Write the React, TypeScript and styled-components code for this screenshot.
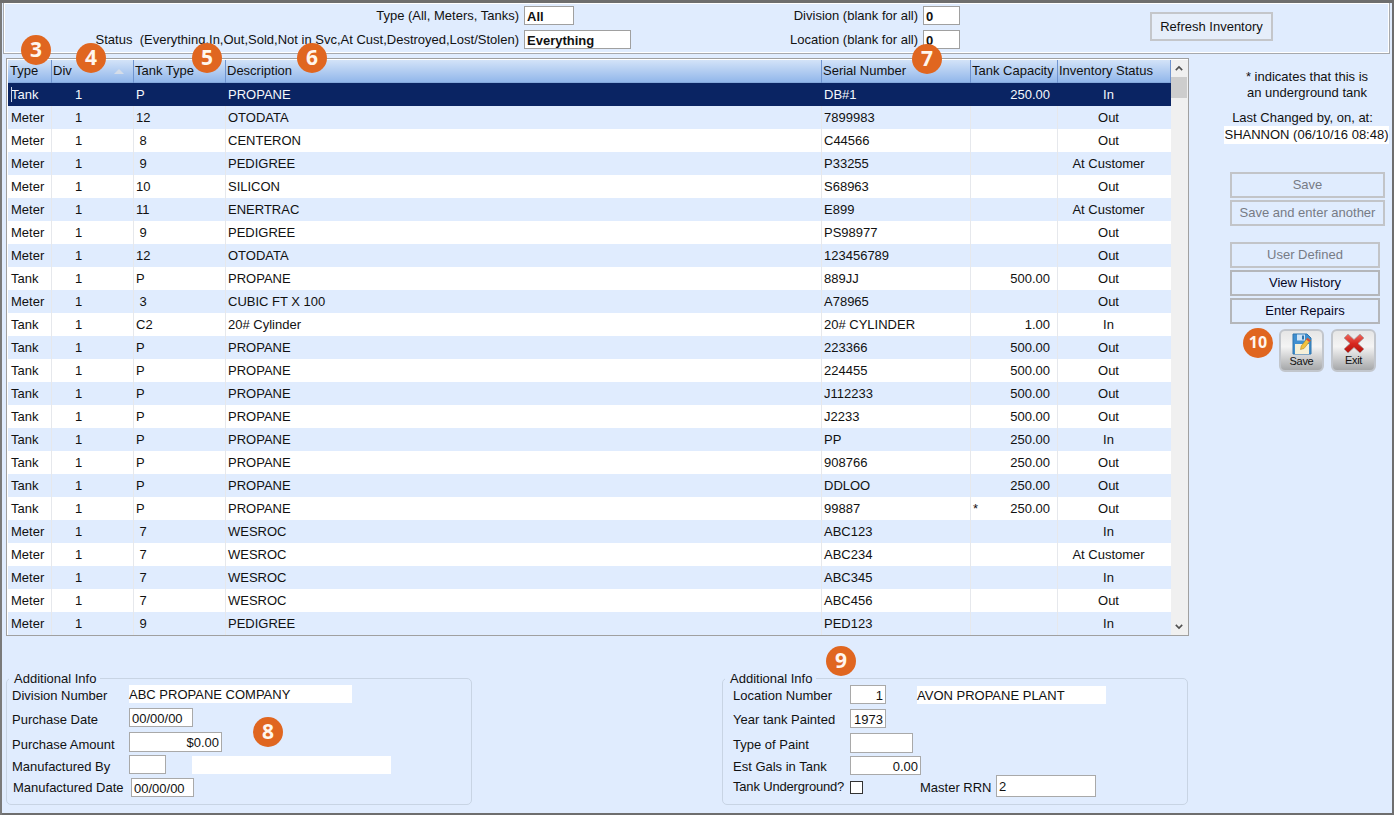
import React from 'react';
import styled, { createGlobalStyle } from 'styled-components';

// Types
type Align = 'left' | 'right' | 'center';

interface InventoryRow {
  type: string;
  code: string;
  description: string;
  serial: string;
  capacity?: string;
  underground?: boolean;
  status: string;
}

const ROWS: InventoryRow[] = [
  { type: 'Tank', code: 'P', description: 'PROPANE', serial: 'DB#1', capacity: '250.00', status: 'In' },
  { type: 'Meter', code: '12', description: 'OTODATA', serial: '7899983', status: 'Out' },
  { type: 'Meter', code: ' 8', description: 'CENTERON', serial: 'C44566', status: 'Out' },
  { type: 'Meter', code: ' 9', description: 'PEDIGREE', serial: 'P33255', status: 'At Customer' },
  { type: 'Meter', code: '10', description: 'SILICON', serial: 'S68963', status: 'Out' },
  { type: 'Meter', code: '11', description: 'ENERTRAC', serial: 'E899', status: 'At Customer' },
  { type: 'Meter', code: ' 9', description: 'PEDIGREE', serial: 'PS98977', status: 'Out' },
  { type: 'Meter', code: '12', description: 'OTODATA', serial: '123456789', status: 'Out' },
  { type: 'Tank', code: 'P', description: 'PROPANE', serial: '889JJ', capacity: '500.00', status: 'Out' },
  { type: 'Meter', code: ' 3', description: 'CUBIC FT X 100', serial: 'A78965', status: 'Out' },
  { type: 'Tank', code: 'C2', description: '20# Cylinder', serial: '20# CYLINDER', capacity: '1.00', status: 'In' },
  { type: 'Tank', code: 'P', description: 'PROPANE', serial: '223366', capacity: '500.00', status: 'Out' },
  { type: 'Tank', code: 'P', description: 'PROPANE', serial: '224455', capacity: '500.00', status: 'Out' },
  { type: 'Tank', code: 'P', description: 'PROPANE', serial: 'J112233', capacity: '500.00', status: 'Out' },
  { type: 'Tank', code: 'P', description: 'PROPANE', serial: 'J2233', capacity: '500.00', status: 'Out' },
  { type: 'Tank', code: 'P', description: 'PROPANE', serial: 'PP', capacity: '250.00', status: 'In' },
  { type: 'Tank', code: 'P', description: 'PROPANE', serial: '908766', capacity: '250.00', status: 'Out' },
  { type: 'Tank', code: 'P', description: 'PROPANE', serial: 'DDLOO', capacity: '250.00', status: 'Out' },
  { type: 'Tank', code: 'P', description: 'PROPANE', serial: '99887', capacity: '250.00', underground: true, status: 'Out' },
  { type: 'Meter', code: ' 7', description: 'WESROC', serial: 'ABC123', status: 'In' },
  { type: 'Meter', code: ' 7', description: 'WESROC', serial: 'ABC234', status: 'At Customer' },
  { type: 'Meter', code: ' 7', description: 'WESROC', serial: 'ABC345', status: 'In' },
  { type: 'Meter', code: ' 7', description: 'WESROC', serial: 'ABC456', status: 'Out' },
  { type: 'Meter', code: ' 9', description: 'PEDIGREE', serial: 'PED123', status: 'In' },
];

const BADGES = [
  { label: '3', x: 36, y: 50 },
  { label: '4', x: 91, y: 58 },
  { label: '5', x: 207, y: 58 },
  { label: '6', x: 312, y: 58 },
  { label: '7', x: 927, y: 59 },
  { label: '8', x: 268, y: 732 },
  { label: '9', x: 841, y: 661 },
  { label: '10', x: 1258, y: 343 },
];

const FloppyIcon = () => (
  <svg width="20" height="22" viewBox="0 0 20 22">
    <path d="M1 1h14l4 4v16H1z" fill="#3f8fd0" stroke="#2f74ad" strokeWidth="1" />
    <rect x="5" y="1.500" width="8" height="6" fill="#cfe4f6" />
    <rect x="10" y="2.500" width="2" height="4" fill="#2f74ad" />
    <rect x="3" y="11" width="14" height="10" fill="#f5f0d8" />
    <path d="M15.500 5l3 2.500-6.500 8-3.500 1 .7-3.500z" fill="#f2c23e" stroke="#a87c17" strokeWidth="0.5" />
    <path d="M15.500 5l3 2.500-1.300 1.600-3-2.500z" fill="#d6453f" />
  </svg>
);

const ExitIcon = () => (
  <svg width="22" height="21" viewBox="0 0 22 21">
    <defs>
      <linearGradient id="exitRed" x1="0" y1="0" x2="0" y2="1">
        <stop offset="0" stopColor="#ee6a60" />
        <stop offset="0.5" stopColor="#d8281f" />
        <stop offset="1" stopColor="#b3140f" />
      </linearGradient>
    </defs>
    <path
      d="M5 1l6 5.500L17 1l4 4-6 5.500 6 5.500-4 4-6-5.500L5 20l-4-4 6-5.500L1 5z"
      fill="url(#exitRed)"
      stroke="#a8a0a0"
      strokeWidth="0.8"
    />
  </svg>
);

const App = () => (
  <Window>
    <GlobalStyle />
    <TopBar>
      <FilterLabel>Type (All, Meters, Tanks)</FilterLabel>
      <FilterInput $width={50}>All</FilterInput>
      <FilterLabel>Division (blank for all)</FilterLabel>
      <FilterInput $width={37}>0</FilterInput>
      <RefreshButton>Refresh Inventory</RefreshButton>
      <FilterLabel>Status  (Everything,In,Out,Sold,Not in Svc,At Cust,Destroyed,Lost/Stolen)</FilterLabel>
      <FilterInput $width={107}>Everything</FilterInput>
      <FilterLabel>Location (blank for all)</FilterLabel>
      <FilterInput $width={37}>0</FilterInput>
    </TopBar>

    <MainArea>
      <GridPanel>
        <GridBody>
          <HeaderRow>
            <HeaderCell>Type</HeaderCell>
            <HeaderCell>
              Div
              <SortArrow />
            </HeaderCell>
            <HeaderCell>Tank Type</HeaderCell>
            <HeaderCell>Description</HeaderCell>
            <HeaderCell>Serial Number</HeaderCell>
            <HeaderCell>Tank Capacity</HeaderCell>
            <HeaderCell>Inventory Status</HeaderCell>
          </HeaderRow>
          {ROWS.map((row, index) => (
            <DataRow key={`${row.serial}-${index}`} $selected={index === 0} $striped={index % 2 === 1}>
              <Cell>
                {index === 0 && <Caret />}
                {row.type}
              </Cell>
              <DivCell>1</DivCell>
              <Cell>{row.code}</Cell>
              <Cell>{row.description}</Cell>
              <Cell>{row.serial}</Cell>
              <Cell $align="right">
                {row.underground && <UndergroundMark>*</UndergroundMark>}
                {row.capacity}
              </Cell>
              <StatusCell>{row.status}</StatusCell>
            </DataRow>
          ))}
        </GridBody>
        <Scrollbar>
          <ScrollArrow viewBox="0 0 10 6">
            <path d="M1 5l4-4 4 4" />
          </ScrollArrow>
          <ScrollThumb />
          <ScrollTrack />
          <ScrollArrow viewBox="0 0 10 6">
            <path d="M1 1l4 4 4-4" />
          </ScrollArrow>
        </Scrollbar>
      </GridPanel>

      <Sidebar>
        <Note>
          * indicates that this is
          <br />
          an underground tank
        </Note>
        <ChangedLabel>Last Changed by, on, at:</ChangedLabel>
        <ChangedValue>SHANNON (06/10/16 08:48)</ChangedValue>
        <SaveGroup>
          <ActionButton $disabled>Save</ActionButton>
          <ActionButton $disabled>Save and enter another</ActionButton>
        </SaveGroup>
        <ActionGroup>
          <ActionButton $disabled>User Defined</ActionButton>
          <ActionButton>View History</ActionButton>
          <ActionButton>Enter Repairs</ActionButton>
        </ActionGroup>
        <IconButtons>
          <IconButton>
            <FloppyIcon />
            Save
          </IconButton>
          <IconButton>
            <ExitIcon />
            Exit
          </IconButton>
        </IconButtons>
      </Sidebar>
    </MainArea>

    <BottomArea>
      <InfoGroup>
        <InfoLegend $left={2}>Additional Info</InfoLegend>
        <InfoRows $left={5}>
          <InfoRow>
            <InfoLabel>Division Number</InfoLabel>
            <ReadOnlyText $width={223}>ABC PROPANE COMPANY</ReadOnlyText>
          </InfoRow>
          <InfoRow $gap={5}>
            <InfoLabel $drop={4}>Purchase Date</InfoLabel>
            <InfoInput $width={64}>00/00/00</InfoInput>
          </InfoRow>
          <InfoRow $gap={5}>
            <InfoLabel $drop={4}>Purchase Amount</InfoLabel>
            <InfoInput $width={93} $height={20} $align="right">
              $0.00
            </InfoInput>
          </InfoRow>
          <InfoRow $gap={3}>
            <InfoLabel $drop={4}>Manufactured By</InfoLabel>
            <InfoInput $width={37} />
            <ReadOnlyText $width={199} $offset={26} />
          </InfoRow>
          <InfoRow $gap={4}>
            <InfoLabel $width={119} $indent={1} $drop={0}>
              Manufactured Date
            </InfoLabel>
            <InfoInput $width={63}>00/00/00</InfoInput>
          </InfoRow>
        </InfoRows>
      </InfoGroup>

      <InfoGroup>
        <InfoLegend $left={2}>Additional Info</InfoLegend>
        <InfoRows $left={10}>
          <InfoRow>
            <InfoLabel>Location Number</InfoLabel>
            <InfoInput $width={36} $align="right">
              1
            </InfoInput>
            <ReadOnlyText $width={189} $offset={31}>
              AVON PROPANE PLANT
            </ReadOnlyText>
          </InfoRow>
          <InfoRow $gap={5}>
            <InfoLabel>Year tank Painted</InfoLabel>
            <InfoInput $width={36} $align="right">
              1973
            </InfoInput>
          </InfoRow>
          <InfoRow $gap={5}>
            <InfoLabel>Type of Paint</InfoLabel>
            <InfoInput $width={63} $height={20} />
          </InfoRow>
          <InfoRow $gap={3}>
            <InfoLabel>Est Gals in Tank</InfoLabel>
            <InfoInput $width={71} $align="right">
              0.00
            </InfoInput>
          </InfoRow>
          <InfoRow $gap={0}>
            <TightLabel $drop={0}>Tank Underground?</TightLabel>
            <CheckBox />
            <MasterLabel>Master RRN</MasterLabel>
            <InfoInput $width={100} $height={22}>
              2
            </InfoInput>
          </InfoRow>
        </InfoRows>
      </InfoGroup>
    </BottomArea>

    {BADGES.map((badge) => (
      <Badge key={badge.label} $x={badge.x} $y={badge.y}>
        {badge.label}
      </Badge>
    ))}
  </Window>
);

export default App;

const GlobalStyle = createGlobalStyle`
  html, body {
    margin: 0;
    padding: 0;
    overflow: hidden;
  }
  body {
    font-family: "Liberation Sans", Arial, sans-serif;
    font-size: 13px;
    color: #111;
  }
  * {
    box-sizing: border-box;
  }
`;

const Window = styled.div`
  position: relative;
  width: 1394px;
  height: 815px;
  padding: 3px 3px 2px 3px;
  background: #e0ecfe;
  box-shadow: inset 0 3px 0 #6e6e6e, inset 2px 0 0 #7a7a7a, inset -2px 0 0 #6e6e6e, inset 0 -2px 0 #6e6e6e;
  overflow: hidden;
`;

const TopBar = styled.div`
  display: grid;
  grid-template-columns: 516px 107px 282px 37px auto;
  grid-template-rows: 19px 19px;
  column-gap: 5px;
  row-gap: 5px;
  align-items: center;
  height: 51px;
  padding-top: 3px;
  border: solid #a7a9ad;
  border-width: 0 1px 1px 1px;
  box-shadow: inset 1px 1px 0 #fff, inset -1px -1px 0 #fff;
  margin-right: 1px;
`;

const FilterLabel = styled.span`
  margin: 0 1px 0 -1px;
  text-align: right;
  white-space: pre;
`;

const FilterInput = styled.div<{ $width: number }>`
  width: ${({ $width }) => $width}px;
  height: 19px;
  margin-left: -1px;
  padding: 0 2px;
  background: #fff;
  border: 1px solid #a0a0a0;
  font-weight: 700;
  line-height: 19px;
`;

const RefreshButton = styled.div`
  grid-column: 5;
  grid-row: 1 / span 2;
  width: 123px;
  height: 29px;
  margin: -2px 0 0 184px;
  background: #e6eefa;
  border: 2px solid #c4c6ca;
  text-align: center;
  line-height: 25px;
  white-space: nowrap;
`;

const MainArea = styled.div`
  display: flex;
  padding: 4px 0 0 3px;
`;

const GridPanel = styled.div`
  display: flex;
  flex: none;
  width: 1183px;
  height: 578px;
  background: #fff;
  border: 1px solid #a0a0a0;
`;

const GridBody = styled.div`
  flex: 1;
  padding-left: 1px;
`;

const COLUMNS = '44px 82px 92px 596px 149px 87px 113px';

const HeaderRow = styled.div`
  display: grid;
  grid-template-columns: ${COLUMNS};
  height: 23px;
  margin-top: 1px;
  background: linear-gradient(#d3e3f8, #8fb5ea);
`;

const HeaderCell = styled.div`
  position: relative;
  padding: 3px 0 0 1px;
  border-right: 1px solid #7094cf;
  white-space: nowrap;
  box-shadow: inset 0 -1px 0 #84a8dc;

  &:first-child {
    padding-left: 2px;
  }
`;

const SortArrow = styled.span`
  position: absolute;
  top: 9px;
  right: 9px;
  width: 0;
  height: 0;
  border-left: 5px solid transparent;
  border-right: 5px solid transparent;
  border-bottom: 5px solid #d5dde9;
`;

const DataRow = styled.div<{ $selected?: boolean; $striped?: boolean }>`
  display: grid;
  grid-template-columns: ${COLUMNS};
  height: 23px;
  line-height: 23px;
  background: ${({ $selected, $striped }) => ($selected ? '#0a2463' : $striped ? '#e0ecfe' : '#fff')};
  color: ${({ $selected }) => ($selected ? '#f4f7fc' : '#111')};
  --cell-line: ${({ $selected }) => ($selected ? 'transparent' : '#e6e8ec')};
`;

const Cell = styled.div<{ $align?: Align }>`
  position: relative;
  padding: 0 ${({ $align }) => ($align === 'right' ? '7px' : '0')} 0 2px;
  border-right: 1px solid var(--cell-line);
  text-align: ${({ $align }) => $align || 'left'};
  white-space: pre;

  &:first-child {
    padding-left: 3px;
  }
`;

const DivCell = styled(Cell)`
  padding-left: 23px;
`;

const StatusCell = styled(Cell)`
  padding-right: 12px;
  padding-left: 0;
  text-align: center;
  border-right: 0;
`;

const Caret = styled.span`
  position: absolute;
  top: 4px;
  left: 3px;
  width: 1px;
  height: 15px;
  background: #c9d4e6;
`;

const UndergroundMark = styled.span`
  position: absolute;
  left: 2px;
`;

const Scrollbar = styled.div`
  display: flex;
  flex-direction: column;
  width: 17px;
  margin-top: 1px;
  background: #f0f0f0;
`;

const ScrollArrow = styled.svg`
  flex: none;
  width: 16px;
  height: 17px;
  padding: 5px 4px;
  fill: none;
  stroke: #505050;
  stroke-width: 2;
`;

const ScrollThumb = styled.div`
  flex: none;
  width: 16px;
  height: 21px;
  background: #cdcdcd;
`;

const ScrollTrack = styled.div`
  flex: 1;
`;

const Sidebar = styled.div`
  display: flex;
  flex-direction: column;
  align-items: flex-start;
  width: 201px;
  padding-top: 11px;
`;

const Note = styled.div`
  width: 100%;
  padding-left: 35px;
  text-align: center;
  line-height: 16px;
`;

const ChangedLabel = styled.div`
  width: 100%;
  margin-top: 9px;
  padding-left: 26px;
  text-align: center;
  line-height: 16px;
`;

const ChangedValue = styled.div`
  width: 165px;
  height: 18px;
  margin: 0 0 0 35px;
  background: #fff;
  text-align: center;
  line-height: 18px;
  white-space: nowrap;
`;

const SaveGroup = styled.div`
  display: flex;
  flex-direction: column;
  gap: 2px;
  width: 155px;
  margin: 28px 0 0 41px;
`;

const ActionGroup = styled.div`
  display: flex;
  flex-direction: column;
  gap: 2px;
  width: 150px;
  margin: 16px 0 0 41px;
`;

const ActionButton = styled.div<{ $disabled?: boolean }>`
  height: 26px;
  background: #e0ecfe;
  border: 2px solid ${({ $disabled }) => ($disabled ? '#c2c4c8' : '#b4b6ba')};
  color: ${({ $disabled }) => ($disabled ? '#777b85' : '#05051e')};
  text-align: center;
  line-height: 22px;
  white-space: nowrap;
`;

const IconButtons = styled.div`
  display: flex;
  gap: 7px;
  margin: 5px 0 0 90px;
`;

const IconButton = styled.div`
  display: flex;
  flex-direction: column;
  align-items: center;
  width: 45px;
  height: 43px;
  padding-top: 2px;
  background: linear-gradient(#e6e6e6, #f4f4f4 40%, #a6a8aa);
  border: 2px solid #c2c6cc;
  border-radius: 6px;
  font-size: 11px;
  letter-spacing: -0.3px;
  line-height: 12px;
`;

const BottomArea = styled.div`
  display: flex;
  gap: 250px;
  padding: 35px 0 0 3px;
`;

const InfoGroup = styled.fieldset`
  width: 466px;
  height: 134px;
  margin: 0;
  padding: 0;
  border: 1px solid #c8d4e4;
  border-radius: 5px;
`;

const InfoLegend = styled.legend<{ $left: number }>`
  margin-left: ${({ $left }) => $left}px;
  padding: 1px 4px 0 5px;
  line-height: 13px;
`;

const InfoRows = styled.div<{ $left: number }>`
  display: flex;
  flex-direction: column;
  padding-left: ${({ $left }) => $left}px;
`;

const InfoRow = styled.div<{ $gap?: number }>`
  display: flex;
  align-items: center;
  margin-top: ${({ $gap }) => $gap || 0}px;
`;

const InfoLabel = styled.span<{ $width?: number; $indent?: number; $drop?: number }>`
  flex: none;
  width: ${({ $width }) => $width || 117}px;
  padding-left: ${({ $indent }) => $indent || 0}px;
  padding-top: ${({ $drop }) => ($drop === undefined ? 2 : $drop)}px;
  white-space: nowrap;
`;

const TightLabel = styled(InfoLabel)`
  letter-spacing: -0.18px;
`;

const MasterLabel = styled.span`
  flex: none;
  width: 76px;
  margin-left: 57px;
  padding-top: 2px;
  white-space: nowrap;
`;

const InfoInput = styled.div<{ $width: number; $height?: number; $align?: Align }>`
  flex: none;
  width: ${({ $width }) => $width}px;
  height: ${({ $height }) => $height || 19}px;
  padding: 0 2px;
  background: #fff;
  border: 1px solid #a9a9a9;
  text-align: ${({ $align }) => $align || 'left'};
  line-height: ${({ $height }) => $height || 19}px;
  white-space: nowrap;
`;

const ReadOnlyText = styled.div<{ $width: number; $offset?: number }>`
  flex: none;
  width: ${({ $width }) => $width}px;
  height: 18px;
  margin-left: ${({ $offset }) => $offset || 0}px;
  background: #fff;
  line-height: 20px;
  white-space: nowrap;
`;

const CheckBox = styled.span`
  flex: none;
  width: 13px;
  height: 13px;
  margin-top: 2px;
  background: #fff;
  border: 1px solid #333;
`;

const Badge = styled.div<{ $x: number; $y: number }>`
  position: absolute;
  left: ${({ $x }) => $x - 15}px;
  top: ${({ $y }) => $y - 15}px;
  width: 30px;
  height: 30px;
  border-radius: 50%;
  background: #e06620;
  color: #fff6ee;
  font-family: "Open Sans", sans-serif;
  font-size: ${({ children }) => (String(children).length > 1 ? 16 : 21)}px;
  font-weight: 700;
  line-height: 29px;
  text-align: center;
`;
